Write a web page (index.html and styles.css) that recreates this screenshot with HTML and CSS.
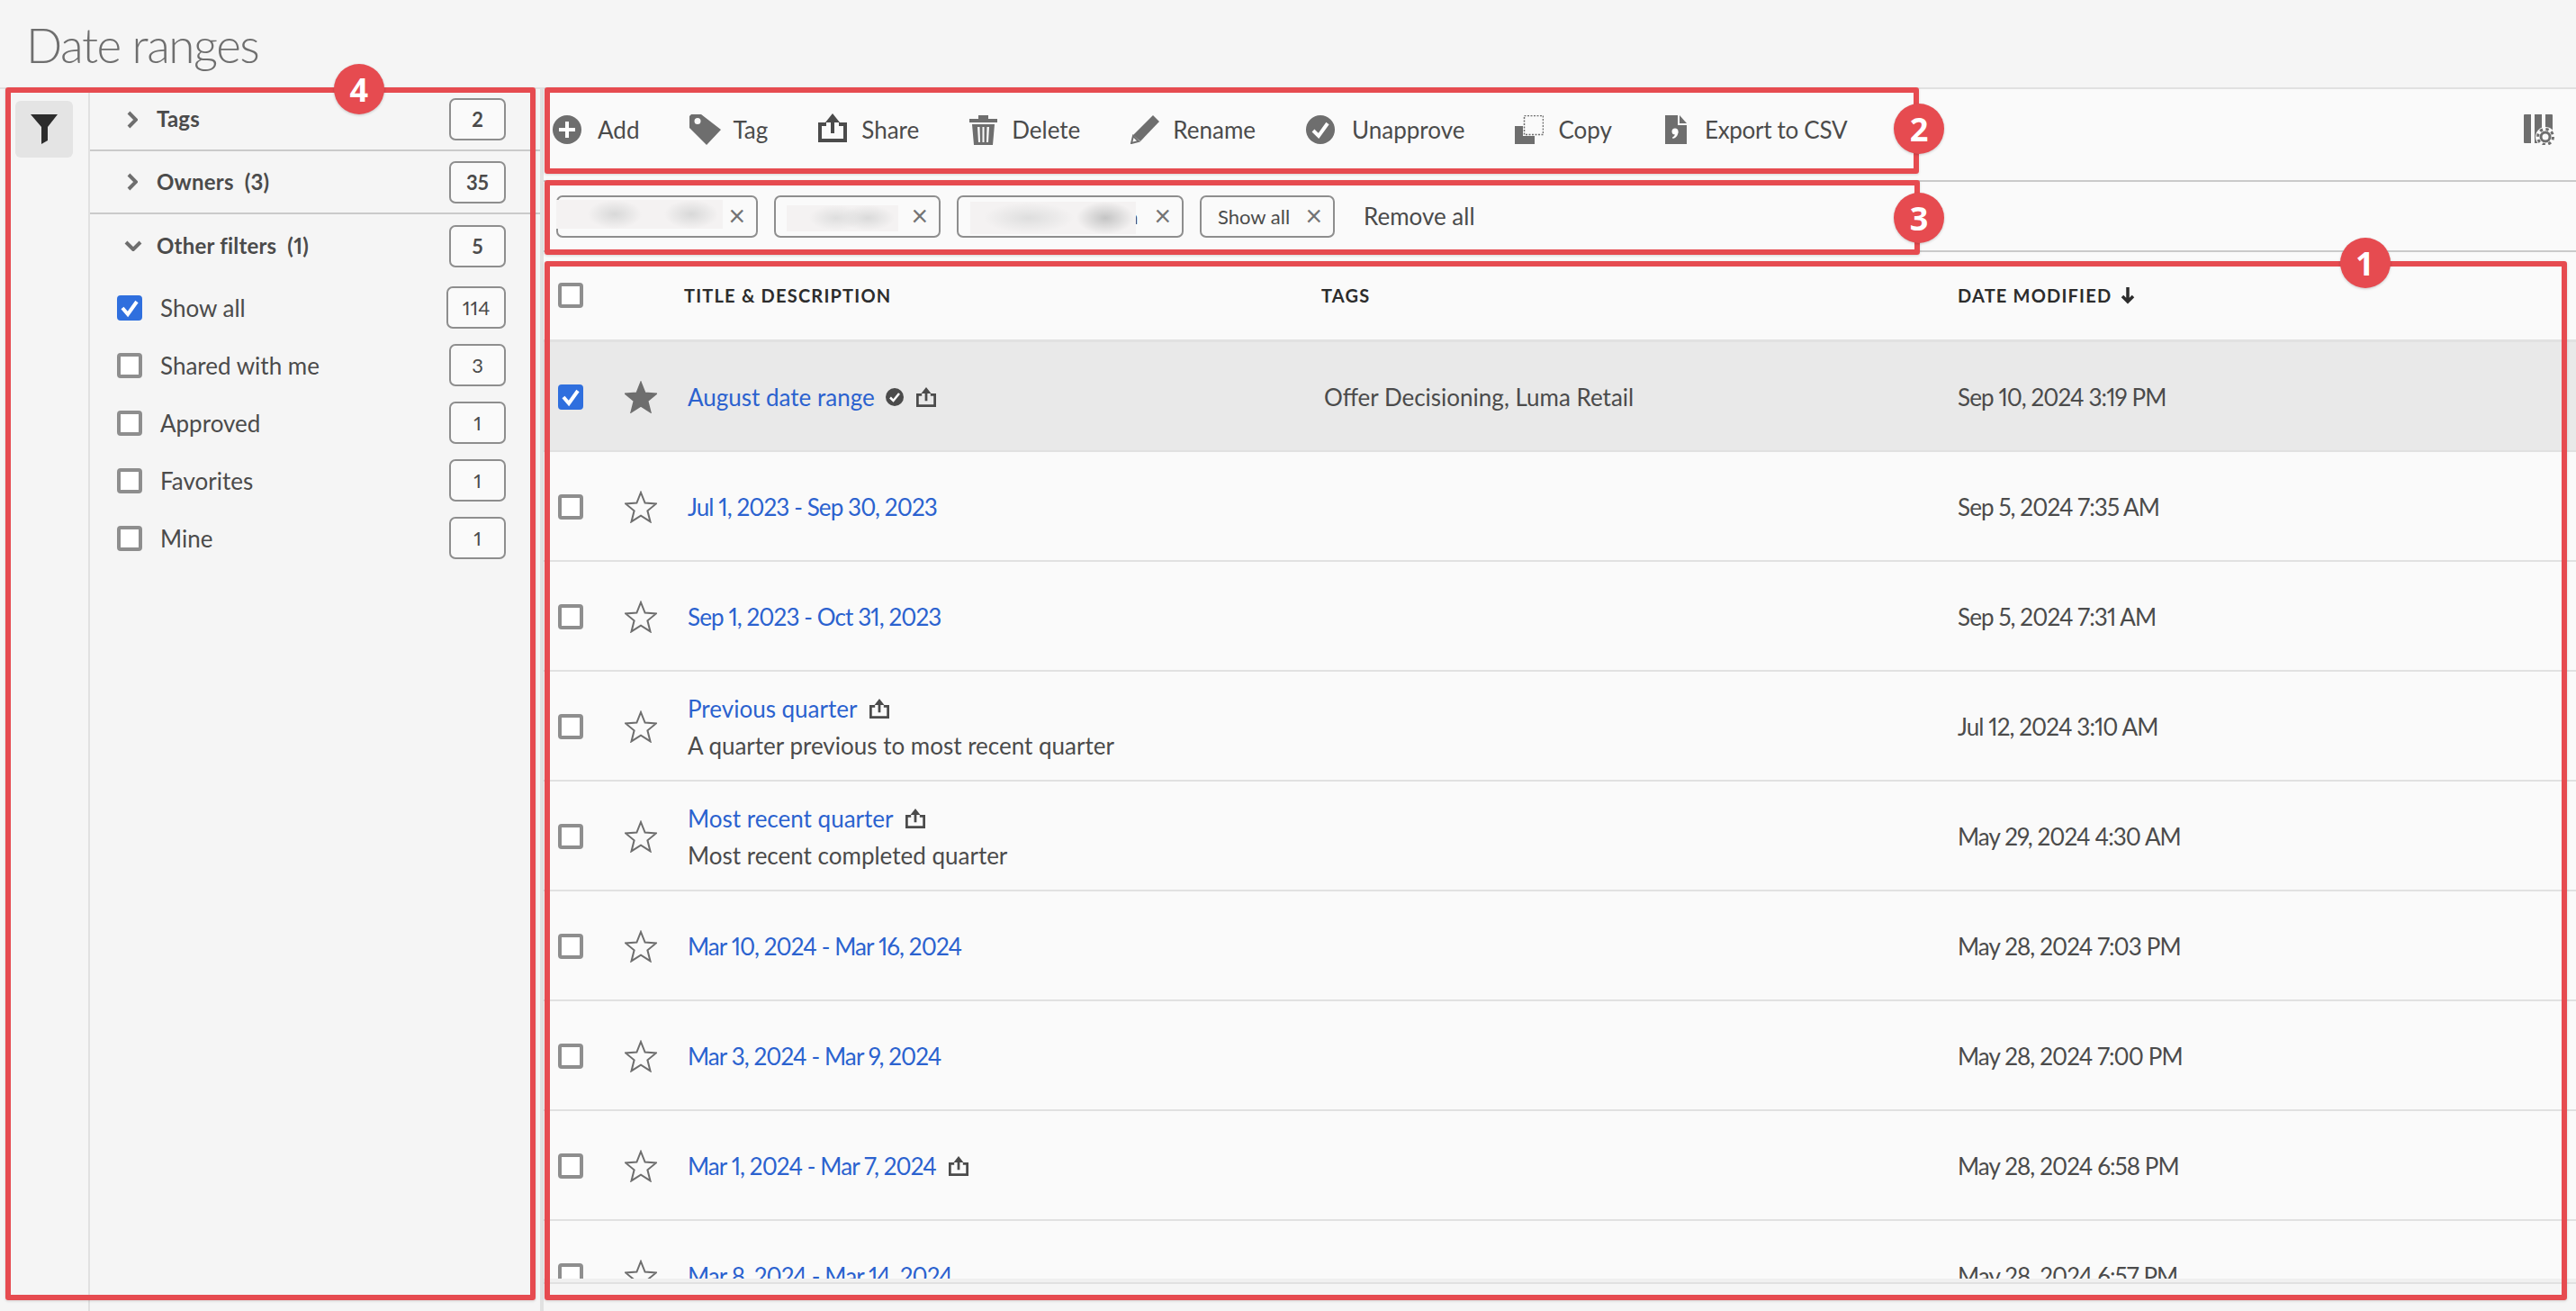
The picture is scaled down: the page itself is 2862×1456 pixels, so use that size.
FILE: index.html
```html
<!DOCTYPE html>
<html lang="en">
<head>
<meta charset="UTF-8">
<meta name="viewport" content="width=device-width, initial-scale=1.0">
<title>Date ranges</title>
<link rel="stylesheet" href="styles.css">
</head>
<body>
    <svg class="defs" width="0" height="0">
        <symbol id="star" viewBox="0 0 36 36"><path d="M18 2l4.6 11.6 12.4.8-9.600 7.900 3.100 12.100L18 27.700 7.500 34.400l3.100-12.100L1 14.400l12.400-.8z"/></symbol>
        <symbol id="share" viewBox="0 0 32 32"><path d="M9 12H2v18h28V12h-7" fill="none" stroke="currentColor" stroke-width="4"/><path d="M16 0l8 10h-6v12h-4V10H8z" fill="currentColor"/></symbol>
        <symbol id="check" viewBox="0 0 28 28"><path d="M6 14l6 7 10-14" fill="none" stroke="#fff" stroke-width="4"/></symbol>
    </svg>

    <h1 class="page-title">Date ranges</h1>

    <div class="content">
        <div class="rail">
            <div class="rail-btn">
                <svg width="30" height="33" viewBox="0 0 30 33"><path d="M0 0h30L19 14v15l-7 4V14z" fill="#2c2c2c"/></svg>
            </div>
        </div>

        <div class="filters">
            <div class="section">
                <svg class="chev" width="12" height="20" viewBox="0 0 12 20"><path d="M2 2l8 8-8 8"/></svg>
                <span class="section-name">Tags</span>
                <span class="count">2</span>
            </div>
            <div class="section">
                <svg class="chev" width="12" height="20" viewBox="0 0 12 20"><path d="M2 2l8 8-8 8"/></svg>
                <span class="section-name">Owners&nbsp; (3)</span>
                <span class="count">35</span>
            </div>
            <div class="section section-open">
                <svg class="chev chev-down" width="20" height="12" viewBox="0 0 20 12"><path d="M2 2l8 8 8-8"/></svg>
                <span class="section-name">Other filters&nbsp; (1)</span>
                <span class="count">5</span>
            </div>
            <div class="filter-list">
                <div class="filter">
                    <span class="box box-on"><svg width="28" height="28"><use href="#check"/></svg></span>
                    <span class="filter-name">Show all</span>
                    <span class="count count-wide">114</span>
                </div>
                <div class="filter"><span class="box"></span><span class="filter-name">Shared with me</span><span class="count">3</span></div>
                <div class="filter"><span class="box"></span><span class="filter-name">Approved</span><span class="count">1</span></div>
                <div class="filter"><span class="box"></span><span class="filter-name">Favorites</span><span class="count">1</span></div>
                <div class="filter"><span class="box"></span><span class="filter-name">Mine</span><span class="count">1</span></div>
            </div>
        </div>

        <div class="main">
            <div class="toolbar">
                <div class="tool tool-add">
                    <svg width="32" height="32" viewBox="0 0 32 32"><circle cx="16" cy="16" r="16" fill="#6e6e6e"/><path d="M16 7v18M7 16h18" stroke="#fff" stroke-width="4"/></svg>
                    Add
                </div>
                <div class="tool tool-tag">
                    <svg width="35" height="34" viewBox="0 0 35 34"><path fill-rule="evenodd" d="M2 0h11l22 17-16 17L0 15V2zm7 4a3.500 3.500 0 100 7 3.500 3.500 0 000-7z" fill="#6e6e6e"/></svg>
                    Tag
                </div>
                <div class="tool tool-share">
                    <svg width="32" height="32" viewBox="0 0 32 32"><use href="#share"/></svg>
                    Share
                </div>
                <div class="tool">
                    <svg width="31" height="34" viewBox="0 0 31 34"><path d="M0 5h10V1h11v4h10v4H0z" fill="#6e6e6e"/><path fill-rule="evenodd" d="M3 11h25l-2 23H5zm6 3l1 17h2l-.5-17zm5.500 0v17h2V14zm5 0L19 31h2l1-17z" fill="#6e6e6e"/></svg>
                    Delete
                </div>
                <div class="tool tool-rename">
                    <svg width="32" height="32" viewBox="0 0 32 32"><path d="M25 0l7 7-21 22-8-7z" fill="#6e6e6e"/><path d="M3 23l6 6-8 2z" fill="#fafafa" stroke="#6e6e6e" stroke-width="2"/></svg>
                    Rename
                </div>
                <div class="tool tool-approve">
                    <svg width="32" height="32" viewBox="0 0 32 32"><circle cx="16" cy="16" r="16" fill="#6e6e6e"/><path d="M8 17l6 6 10-14" fill="none" stroke="#fff" stroke-width="4"/></svg>
                    Unapprove
                </div>
                <div class="tool">
                    <svg width="32" height="32" viewBox="0 0 32 32"><path d="M0 12h9v11h13v9H0z" fill="#6e6e6e"/><rect x="10.500" y=".5" width="21" height="21" fill="none" stroke="#6e6e6e" stroke-width="1.500" stroke-dasharray="2 1.500"/></svg>
                    Copy
                </div>
                <div class="tool tool-export">
                    <svg width="24" height="32" viewBox="0 0 24 32"><path d="M0 0h14v11h10v21H0z" fill="#6e6e6e"/><path d="M16 0l8 9h-8z" fill="#6e6e6e"/><circle cx="11" cy="18" r="3.500" fill="#fff"/><path d="M14.500 18c0 4-2 7-6 8l-.5-1.500c2-1 3-2.500 3-4z" fill="#fff"/></svg>
                    Export to CSV
                </div>
                <svg class="col-settings" width="34" height="34" viewBox="0 0 34 34">
                    <path d="M0 1a1 1 0 011-1h7v32H1a1 1 0 01-1-1zM12 0h8v32h-8zM24 0h7a1 1 0 011 1v31h-8z" fill="#6e6e6e"/>
                    <circle cx="24" cy="25" r="11" fill="#fafafa"/>
                    <circle cx="24" cy="25" r="5" fill="none" stroke="#6e6e6e" stroke-width="3"/>
                    <circle cx="24" cy="25" r="8.500" fill="none" stroke="#6e6e6e" stroke-width="3" stroke-dasharray="3.300 3.400"/>
                </svg>
            </div>

            <div class="chips">
                <div class="chip chip-a"><span class="smudge smudge-a"></span><span class="chip-x">×</span></div>
                <div class="chip chip-b"><span class="smudge smudge-b"></span><span class="chip-x">×</span></div>
                <div class="chip chip-c"><span class="smudge smudge-c"></span><span class="chip-tail">a</span><span class="chip-x">×</span></div>
                <div class="chip chip-d">Show all<span class="chip-x">×</span></div>
                <span class="remove-all">Remove all</span>
            </div>

            <div class="table">
                <div class="row row-head">
                    <div class="pick"><span class="box"></span></div>
                    <div class="th th-title">TITLE &amp; DESCRIPTION</div>
                    <div class="th th-tags">TAGS</div>
                    <div class="th">DATE MODIFIED
                        <svg class="sort" width="16" height="20" viewBox="0 0 16 20"><path d="M8 1v16M2 11l6 6 6-6" fill="none" stroke="#2c2c2c" stroke-width="3.500"/></svg>
                    </div>
                </div>

                <div class="row row-selected">
                    <div class="pick">
                        <span class="box box-on"><svg width="28" height="28"><use href="#check"/></svg></span>
                        <svg class="star star-on" width="36" height="36"><use href="#star"/></svg>
                    </div>
                    <div class="title-cell">
                        <div class="title-line">
                            <a class="link">August date range</a>
                            <svg class="approved" width="20" height="20" viewBox="0 0 20 20"><circle cx="10" cy="10" r="10" fill="#4b4b4b"/><path d="M5 10.500l3.500 3.500L15 6" fill="none" stroke="#fff" stroke-width="2.500"/></svg>
                            <svg class="mini-share" width="22" height="22"><use href="#share"/></svg>
                        </div>
                    </div>
                    <div>Offer Decisioning, Luma Retail</div>
                    <div class="when">Sep 10, 2024 3:19 PM</div>
                </div>

                <div class="row">
                    <div class="pick"><span class="box"></span><svg class="star" width="36" height="36"><use href="#star"/></svg></div>
                    <div class="title-cell"><div class="title-line"><a class="link when">Jul 1, 2023 - Sep 30, 2023</a></div></div>
                    <div></div>
                    <div class="when">Sep 5, 2024 7:35 AM</div>
                </div>

                <div class="row">
                    <div class="pick"><span class="box"></span><svg class="star" width="36" height="36"><use href="#star"/></svg></div>
                    <div class="title-cell"><div class="title-line"><a class="link when">Sep 1, 2023 - Oct 31, 2023</a></div></div>
                    <div></div>
                    <div class="when">Sep 5, 2024 7:31 AM</div>
                </div>

                <div class="row">
                    <div class="pick"><span class="box"></span><svg class="star" width="36" height="36"><use href="#star"/></svg></div>
                    <div class="title-cell">
                        <div class="title-line"><a class="link">Previous quarter</a><svg class="mini-share" width="22" height="22"><use href="#share"/></svg></div>
                        <div class="desc">A quarter previous to most recent quarter</div>
                    </div>
                    <div></div>
                    <div class="when">Jul 12, 2024 3:10 AM</div>
                </div>

                <div class="row">
                    <div class="pick"><span class="box"></span><svg class="star" width="36" height="36"><use href="#star"/></svg></div>
                    <div class="title-cell">
                        <div class="title-line"><a class="link">Most recent quarter</a><svg class="mini-share" width="22" height="22"><use href="#share"/></svg></div>
                        <div class="desc">Most recent completed quarter</div>
                    </div>
                    <div></div>
                    <div class="when">May 29, 2024 4:30 AM</div>
                </div>

                <div class="row">
                    <div class="pick"><span class="box"></span><svg class="star" width="36" height="36"><use href="#star"/></svg></div>
                    <div class="title-cell"><div class="title-line"><a class="link when">Mar 10, 2024 - Mar 16, 2024</a></div></div>
                    <div></div>
                    <div class="when">May 28, 2024 7:03 PM</div>
                </div>

                <div class="row">
                    <div class="pick"><span class="box"></span><svg class="star" width="36" height="36"><use href="#star"/></svg></div>
                    <div class="title-cell"><div class="title-line"><a class="link when">Mar 3, 2024 - Mar 9, 2024</a></div></div>
                    <div></div>
                    <div class="when">May 28, 2024 7:00 PM</div>
                </div>

                <div class="row">
                    <div class="pick"><span class="box"></span><svg class="star" width="36" height="36"><use href="#star"/></svg></div>
                    <div class="title-cell">
                        <div class="title-line"><a class="link when">Mar 1, 2024 - Mar 7, 2024</a><svg class="mini-share" width="22" height="22"><use href="#share"/></svg></div>
                    </div>
                    <div></div>
                    <div class="when">May 28, 2024 6:58 PM</div>
                </div>

                <div class="row">
                    <div class="pick"><span class="box"></span><svg class="star" width="36" height="36"><use href="#star"/></svg></div>
                    <div class="title-cell"><div class="title-line"><a class="link when">Mar 8, 2024 - Mar 14, 2024</a></div></div>
                    <div></div>
                    <div class="when">May 28, 2024 6:57 PM</div>
                </div>
            </div>
            <div class="table-foot"></div>
        </div>
    </div>

    <!-- numbered callouts that sit on top of the screen -->
    <div class="callout callout-1"></div>
    <div class="callout callout-2"></div>
    <div class="callout callout-3"></div>
    <div class="callout callout-4"></div>
    <div class="marker marker-1">1</div>
    <div class="marker marker-2">2</div>
    <div class="marker marker-3">3</div>
    <div class="marker marker-4">4</div>
</body>
</html>
```

FILE: styles.css
```css
* {
    box-sizing: border-box;
}
html, body {
    height: 100%;
}
body {
    position: relative;
    margin: 0;
    height: 1456px;
    overflow: hidden;
    background-color: #f5f5f5;
    color: #4b4b4b;
    font-family: "Lato", "Liberation Sans", sans-serif;
    font-size: 26px;
    font-variant-numeric: proportional-nums;
}
.defs {
    display: block;
    height: 0;
}
.page-title {
    margin: 0;
    height: 97px;
    padding: 18px 0 0 29px;
    color: #6e6e6e;
    font-size: 53px;
    font-weight: 300;
    letter-spacing: -1.500px;
    line-height: 64px;
}

.content {
    display: flex;
    height: 1359px;
    border-top: 2px solid #e1e1e1;
}
.rail {
    flex: 0 0 100px;
    padding: 13px 0 0 17px;
    border-right: 2px solid #e1e1e1;
}
.rail-btn {
    display: flex;
    align-items: center;
    justify-content: center;
    width: 64px;
    height: 63px;
    background-color: #e4e4e4;
    border-radius: 6px;
}

.filters {
    flex: 0 0 504px;
    border-right: 4px solid #e1e1e1;
}
.section {
    display: flex;
    align-items: center;
    height: 70px;
    padding: 0 38px 0 41px;
    border-bottom: 2px solid #cacaca;
}
.section:first-child {
    height: 69px;
}
.section-open {
    padding-left: 38px;
    border-bottom: 0;
}
.chev {
    flex: none;
    fill: none;
    stroke: #6e6e6e;
    stroke-width: 4;
}
.section-name {
    margin-left: 21px;
    margin-top: -2px;
    font-size: 24px;
    font-weight: 700;
    letter-spacing: 0.2px;
}
.section-open .section-name {
    margin-left: 16px;
}
.count {
    display: flex;
    align-items: center;
    justify-content: center;
    width: 63px;
    height: 47px;
    margin-left: auto;
    background-color: #fafafa;
    border: 2px solid #8e8e8e;
    border-radius: 7px;
    font-size: 22px;
}
.section .count {
    font-weight: 700;
    letter-spacing: 0;
}
.count-wide {
    width: 66px;
}
.filter-list {
    padding: 10px 38px 0 30px;
}
.filter {
    display: flex;
    align-items: center;
    height: 47px;
    margin-bottom: 17px;
}
.filter-name {
    margin-left: 20px;
}
.box {
    flex: none;
    display: block;
    width: 28px;
    height: 28px;
    background-color: #fff;
    border: 4px solid #8e8e8e;
    border-radius: 4px;
}
.box-on {
    background-color: #2f6fde;
    border-color: #2f6fde;
}
.box-on svg {
    display: block;
    margin: -4px;
}

.main {
    flex: 1;
    min-width: 0;
}
.toolbar {
    display: flex;
    align-items: center;
    gap: 56px;
    height: 103px;
    padding: 0 24px 12px 10px;
    background-color: #fafafa;
    border-bottom: 2px solid #cacaca;
}
.tool {
    display: flex;
    align-items: center;
    gap: 16px;
    white-space: nowrap;
}
.tool-add {
    gap: 18px;
}
.tool-tag {
    gap: 13px;
}
.tool-share svg {
    margin-top: -4px;
}
.tool-rename {
    gap: 15px;
}
.tool-approve {
    gap: 19px;
}
.tool-export {
    margin-left: 3px;
    gap: 20px;
    letter-spacing: -0.3px;
}
.col-settings {
    margin-left: auto;
}
.chips {
    display: flex;
    align-items: center;
    height: 78px;
    padding-left: 14px;
    background-color: #fafafa;
    border-bottom: 2px solid #cacaca;
}
.chip {
    position: relative;
    display: flex;
    align-items: center;
    justify-content: flex-end;
    height: 47px;
    margin-right: 18px;
    padding-right: 12px;
    background-color: #fafafa;
    border: 2px solid #8e8e8e;
    border-radius: 7px;
    font-size: 22px;
}
.chip-a {
    width: 224px;
}
.chip-b {
    width: 185px;
}
.chip-c {
    width: 252px;
}
.chip-d {
    width: 150px;
    justify-content: space-between;
    padding-left: 18px;
}
.chip-x {
    color: #747474;
    font-size: 32px;
    line-height: 1;
    margin-top: -3px;
}
.chip-tail {
    margin-right: 18px;
}
.remove-all {
    margin-left: 14px;
}
.smudge {
    position: absolute;
    background-color: #f4f2f2;
    background-repeat: no-repeat;
}
.smudge-a {
    left: -2px;
    top: 3px;
    width: 185px;
    height: 32px;
    background-image: radial-gradient(closest-side, #d8d8d8, transparent), radial-gradient(closest-side, #d8d8d8, transparent);
    background-size: 60px 32px, 60px 32px;
    background-position: 35px 0, 120px 0;
}
.smudge-b {
    left: 12px;
    top: 9px;
    width: 124px;
    height: 29px;
    background-image: radial-gradient(closest-side, #dedede, transparent), radial-gradient(closest-side, #dadada, transparent);
    background-size: 60px 28px, 60px 28px;
    background-position: 25px 0, 60px 0;
}
.smudge-c {
    left: 13px;
    top: 5px;
    width: 184px;
    height: 36px;
    background-image: radial-gradient(closest-side, #dedede, transparent), radial-gradient(closest-side, #c4c4c4, transparent);
    background-size: 100px 34px, 64px 36px;
    background-position: 15px 1px, 118px 0;
}

.table {
    height: 1140px;
    overflow: hidden;
    background-color: #fafafa;
}
.row {
    display: grid;
    grid-template-columns: 160px 707px 704px 1fr;
    align-items: center;
    height: 122px;
    padding-top: 2px;
    border-bottom: 2px solid #e1e1e1;
}
.row-head {
    height: 100px;
    border-bottom-width: 3px;
    padding-top: 0;
    padding-bottom: 2px;
}
.row-selected {
    background-color: #e9e9e9;
}
.pick {
    display: flex;
    align-items: center;
    gap: 46px;
    padding-left: 16px;
}
.th {
    color: #2c2c2c;
    font-size: 20px;
    font-weight: 700;
    letter-spacing: 1.200px;
}
.th-title {
    margin-left: -4px;
}
.th-tags {
    margin-left: -3px;
}
.sort {
    vertical-align: -2px;
    margin-left: 4px;
}
.star {
    fill: none;
    stroke: #6e6e6e;
    stroke-width: 2;
}
.star-on {
    fill: #6e6e6e;
}
.title-line {
    display: flex;
    align-items: center;
}
.link {
    color: #2b62cf;
}
.when {
    letter-spacing: -0.9px;
}
.desc {
    margin-top: 9px;
}
.approved {
    margin-left: 12px;
}
.mini-share {
    margin-left: 14px;
    color: #4b4b4b;
}
.table-foot {
    height: 6px;
    background-color: #f0f0f0;
    border-bottom: 2px solid #e1e1e1;
}

.callout {
    position: absolute;
    border: 6px solid #e64b50;
    border-radius: 3px;
    box-shadow: 0 1px 3px rgba(0, 0, 0, 0.15);
}
.callout-1 {
    left: 605px;
    top: 290px;
    width: 2247px;
    height: 1154px;
}
.callout-2 {
    left: 605px;
    top: 97px;
    width: 1527px;
    height: 96px;
}
.callout-3 {
    left: 605px;
    top: 200px;
    width: 1528px;
    height: 83px;
}
.callout-4 {
    left: 6px;
    top: 97px;
    width: 589px;
    height: 1347px;
}
.marker {
    position: absolute;
    display: flex;
    align-items: center;
    justify-content: center;
    width: 56px;
    height: 56px;
    background-color: #e64b50;
    border-radius: 50%;
    box-shadow: 0 1px 3px rgba(0, 0, 0, 0.2);
    color: #fff;
    font-family: "Open Sans", sans-serif;
    font-size: 36px;
    font-weight: 700;
}
.marker-1 {
    left: 2600px;
    top: 264px;
}
.marker-2 {
    left: 2104px;
    top: 115px;
}
.marker-3 {
    left: 2104px;
    top: 214px;
}
.marker-4 {
    left: 371px;
    top: 71px;
}
```
